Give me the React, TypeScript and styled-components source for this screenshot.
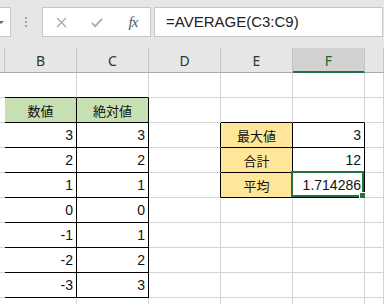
import React from "react";
import styled, { createGlobalStyle, css } from "styled-components";

const GlobalStyle = createGlobalStyle`
  html, body { margin: 0; padding: 0; background: #ffffff; overflow: hidden; }
  body { font-family: "Liberation Sans", "Noto Sans CJK JP", sans-serif; }
`;

const Wrapper = styled.div`
  width: 384px;
  height: 304px;
  overflow: hidden;
  background: #ffffff;
`;

const FormulaBar = styled.div`
  display: flex;
  align-items: flex-start;
  height: 48px;
  box-sizing: border-box;
  padding-top: 7px;
  background: #e6e6e6;
`;

const NameBox = styled.div`
  width: 11px;
  height: 30px;
  box-sizing: border-box;
  background: #ffffff;
  border: 1px solid #c6c6c6;
  border-left: none;
  display: flex;
  align-items: center;
`;

const Arrow = styled.div`
  width: 0;
  height: 0;
  border-left: 3px solid transparent;
  border-right: 3px solid transparent;
  border-top: 3px solid #6a6a6a;
  margin-left: -2px;
`;

const Grip = styled.div`
  margin-left: 14px;
  height: 30px;
  display: flex;
  flex-direction: column;
  justify-content: center;
  gap: 2px;
`;

const Dot = styled.span`
  width: 2px;
  height: 2px;
  background: #a3a3a3;
`;

const FxBox = styled.div`
  margin-left: 15px;
  width: 109px;
  height: 30px;
  box-sizing: border-box;
  background: #ffffff;
  border: 1px solid #c6c6c6;
  display: flex;
  align-items: center;
  padding-left: 12px;
  gap: 24px;
`;

const IconSlot = styled.span`
  width: 12px;
  height: 14px;
  display: flex;
  align-items: center;
  justify-content: center;
`;

const FxText = styled.span`
  font-family: "Liberation Serif", serif;
  font-style: italic;
  font-size: 15px;
  color: #555555;
  letter-spacing: -1px;
  line-height: 14px;
  white-space: nowrap;
`;

const FormulaInput = styled.div`
  margin-left: 3px;
  margin-right: 1px;
  flex: 1;
  height: 30px;
  box-sizing: border-box;
  background: #ffffff;
  border: 1px solid #c6c6c6;
  padding-left: 11px;
  font-family: "Liberation Sans", sans-serif;
  font-size: 15px;
  line-height: 27px;
  color: #222222;
`;

const Sheet = styled.div`
  display: grid;
  grid-template-columns: 5px repeat(5, 72px) 1fr;
  grid-auto-rows: 25px;
`;

const HeaderCell = styled.div<{ $selected?: boolean }>`
  box-sizing: border-box;
  background: ${(p) => (p.$selected ? "#d2d2d2" : "#e6e6e6")};
  border-right: 1px solid #c4c4c4;
  border-bottom: ${(p) => (p.$selected ? "2px solid #217346" : "1px solid #a9a9a9")};
  display: flex;
  align-items: center;
  justify-content: center;
  font-family: "Noto Sans", sans-serif;
  font-size: 14px;
  color: ${(p) => (p.$selected ? "#1e5e3a" : "#333333")};
  padding-top: ${(p) => (p.$selected ? "1px" : "0")};
`;

const Cell = styled.div<{
  $rb: string;
  $bb: string;
  $bg: string;
  $align: "left" | "center" | "right";
  $jp?: boolean;
}>`
  position: relative;
  box-sizing: border-box;
  background: ${(p) => p.$bg};
  border-right: 1px solid ${(p) => p.$rb};
  border-bottom: 1px solid ${(p) => p.$bb};
  display: flex;
  align-items: center;
  justify-content: ${(p) =>
    p.$align === "right" ? "flex-end" : p.$align === "center" ? "center" : "flex-start"};
  padding: 0 3px 0 3px;
  color: #111111;
  white-space: nowrap;
  ${(p) =>
    p.$jp
      ? css`
          font-family: "Noto Sans CJK JP", sans-serif;
          font-size: 13px;
        `
      : css`
          font-family: "Liberation Sans", "Noto Sans CJK JP", sans-serif;
          font-size: 14px;
        `}
`;

const Selection = styled.div`
  position: absolute;
  left: -2px;
  top: -2px;
  right: 0;
  bottom: 0;
  border: 2px solid #217346;
  pointer-events: none;
`;

const FillHandle = styled.div`
  position: absolute;
  right: -4px;
  bottom: -4px;
  width: 5px;
  height: 5px;
  background: #217346;
  border: 1px solid #ffffff;
`;

type CellData = { text: string; jp?: boolean; bg?: string };

const GREEN = "#c6e0b4";
const GOLD = "#ffe699";

const data: Record<string, CellData> = {
  "2,1": { text: "数値", jp: true, bg: GREEN },
  "2,2": { text: "絶対値", jp: true, bg: GREEN },
  "3,1": { text: "3" },
  "3,2": { text: "3" },
  "4,1": { text: "2" },
  "4,2": { text: "2" },
  "5,1": { text: "1" },
  "5,2": { text: "1" },
  "6,1": { text: "0" },
  "6,2": { text: "0" },
  "7,1": { text: "-1" },
  "7,2": { text: "1" },
  "8,1": { text: "-2" },
  "8,2": { text: "2" },
  "9,1": { text: "-3" },
  "9,2": { text: "3" },
  "3,4": { text: "最大値", jp: true, bg: GOLD },
  "4,4": { text: "合計", jp: true, bg: GOLD },
  "5,4": { text: "平均", jp: true, bg: GOLD },
  "3,5": { text: "3" },
  "4,5": { text: "12" },
  "5,5": { text: "1.714286" },
};

const inTable = (r: number, c: number) =>
  (r >= 2 && r <= 9 && c >= 1 && c <= 2) || (r >= 3 && r <= 5 && c >= 4 && c <= 5);

const GRID = "#d4d4d4";
const LINE = "#000000";

const columns = ["", "B", "C", "D", "E", "F", ""];
const rows = [1, 2, 3, 4, 5, 6, 7, 8, 9, 10];

const CloseIcon = () => (
  <svg width="11" height="11" viewBox="0 0 11 11">
    <path d="M1 1 L10 10 M10 1 L1 10" stroke="#a8a8a8" strokeWidth="1.3" fill="none" />
  </svg>
);

const CheckIcon = () => (
  <svg width="13" height="11" viewBox="0 0 13 11">
    <path d="M1 6 L4.5 9.5 L12 1.5" stroke="#a8a8a8" strokeWidth="1.8" fill="none" />
  </svg>
);

export default function App() {
  return (
    <Wrapper>
      <GlobalStyle />
      <FormulaBar>
        <NameBox>
          <Arrow />
        </NameBox>
        <Grip>
          <Dot />
          <Dot />
          <Dot />
        </Grip>
        <FxBox>
          <IconSlot>
            <CloseIcon />
          </IconSlot>
          <IconSlot>
            <CheckIcon />
          </IconSlot>
          <IconSlot>
            <FxText>fx</FxText>
          </IconSlot>
        </FxBox>
        <FormulaInput>=AVERAGE(C3:C9)</FormulaInput>
      </FormulaBar>
      <Sheet>
        {columns.map((label, c) => (
          <HeaderCell key={`h${c}`} $selected={label === "F"}>
            {label}
          </HeaderCell>
        ))}
        {rows.map((r) =>
          columns.map((_, c) => {
            const d = data[`${r},${c}`];
            const rb = inTable(r, c) || inTable(r, c + 1) ? LINE : GRID;
            const bb = inTable(r, c) || inTable(r + 1, c) ? LINE : GRID;
            const selected = r === 5 && c === 5;
            return (
              <Cell
                key={`${r}-${c}`}
                $rb={rb}
                $bb={bb}
                $bg={d?.bg ?? "#ffffff"}
                $align={d?.jp ? "center" : "right"}
                $jp={d?.jp}
              >
                {d?.text}
                {selected && (
                  <Selection>
                    <FillHandle />
                  </Selection>
                )}
              </Cell>
            );
          })
        )}
      </Sheet>
    </Wrapper>
  );
}
